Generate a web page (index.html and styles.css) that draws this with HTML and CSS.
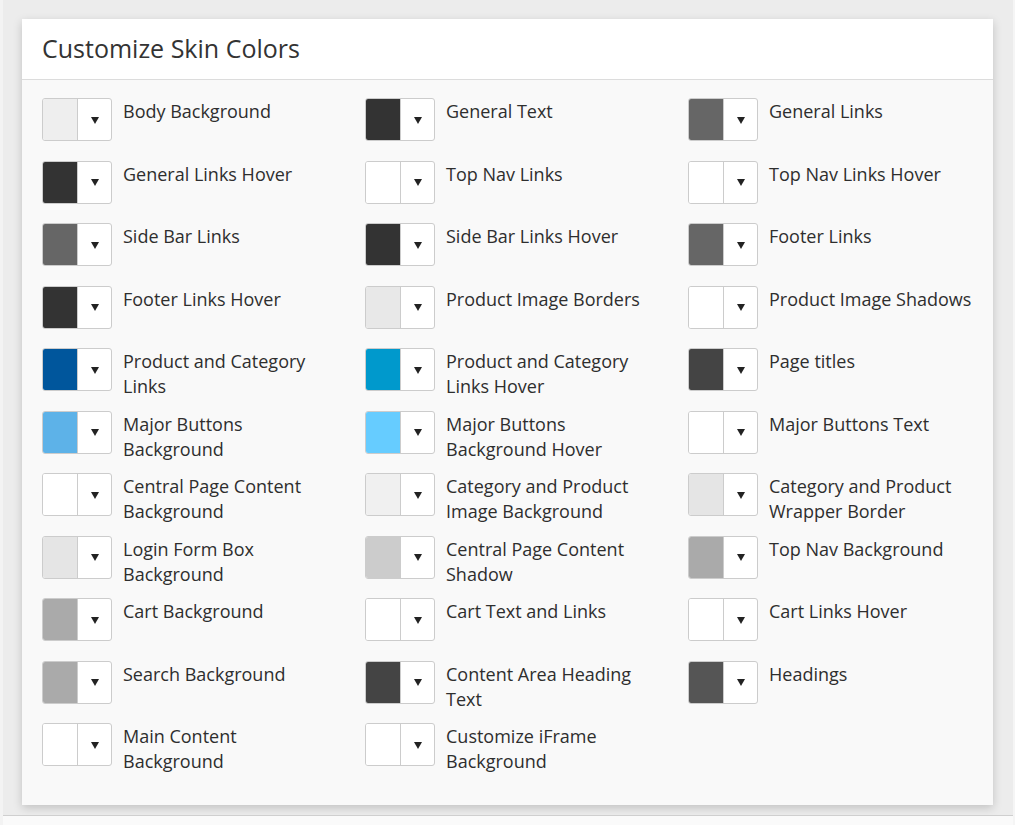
FILE: index.html
```html
<!DOCTYPE html>
<html lang="en">
<head>
  <meta charset="UTF-8">
  <meta name="viewport" content="width=device-width, initial-scale=1.0">
  <title>Customize Skin Colors</title>
  <link rel="stylesheet" href="styles.css">
</head>
<body>
  <div class="page">
    <div class="page-main">
      <div class="skin-panel">
        <div class="skin-panel-header">Customize Skin Colors</div>
        <div class="skin-panel-body">
          <div class="color-field">
            <div class="color-picker"><span class="color-swatch" style="background:#eeeeee"></span><span class="color-arrow"></span></div>
            <div class="color-label">Body Background</div>
          </div>
          <div class="color-field">
            <div class="color-picker"><span class="color-swatch" style="background:#333333"></span><span class="color-arrow"></span></div>
            <div class="color-label">General Text</div>
          </div>
          <div class="color-field">
            <div class="color-picker"><span class="color-swatch" style="background:#666666"></span><span class="color-arrow"></span></div>
            <div class="color-label">General Links</div>
          </div>

          <div class="color-field">
            <div class="color-picker"><span class="color-swatch" style="background:#333333"></span><span class="color-arrow"></span></div>
            <div class="color-label">General Links Hover</div>
          </div>
          <div class="color-field">
            <div class="color-picker"><span class="color-swatch" style="background:#ffffff"></span><span class="color-arrow"></span></div>
            <div class="color-label">Top Nav Links</div>
          </div>
          <div class="color-field">
            <div class="color-picker"><span class="color-swatch" style="background:#ffffff"></span><span class="color-arrow"></span></div>
            <div class="color-label">Top Nav Links Hover</div>
          </div>

          <div class="color-field">
            <div class="color-picker"><span class="color-swatch" style="background:#666666"></span><span class="color-arrow"></span></div>
            <div class="color-label">Side Bar Links</div>
          </div>
          <div class="color-field">
            <div class="color-picker"><span class="color-swatch" style="background:#333333"></span><span class="color-arrow"></span></div>
            <div class="color-label">Side Bar Links Hover</div>
          </div>
          <div class="color-field">
            <div class="color-picker"><span class="color-swatch" style="background:#666666"></span><span class="color-arrow"></span></div>
            <div class="color-label">Footer Links</div>
          </div>

          <div class="color-field">
            <div class="color-picker"><span class="color-swatch" style="background:#333333"></span><span class="color-arrow"></span></div>
            <div class="color-label">Footer Links Hover</div>
          </div>
          <div class="color-field">
            <div class="color-picker"><span class="color-swatch" style="background:#e8e8e8"></span><span class="color-arrow"></span></div>
            <div class="color-label">Product Image Borders</div>
          </div>
          <div class="color-field">
            <div class="color-picker"><span class="color-swatch" style="background:#ffffff"></span><span class="color-arrow"></span></div>
            <div class="color-label">Product Image Shadows</div>
          </div>

          <div class="color-field">
            <div class="color-picker"><span class="color-swatch" style="background:#00569c"></span><span class="color-arrow"></span></div>
            <div class="color-label">Product and Category Links</div>
          </div>
          <div class="color-field">
            <div class="color-picker"><span class="color-swatch" style="background:#0099cc"></span><span class="color-arrow"></span></div>
            <div class="color-label">Product and Category Links Hover</div>
          </div>
          <div class="color-field">
            <div class="color-picker"><span class="color-swatch" style="background:#444444"></span><span class="color-arrow"></span></div>
            <div class="color-label">Page titles</div>
          </div>

          <div class="color-field">
            <div class="color-picker"><span class="color-swatch" style="background:#5db2e8"></span><span class="color-arrow"></span></div>
            <div class="color-label">Major Buttons Background</div>
          </div>
          <div class="color-field">
            <div class="color-picker"><span class="color-swatch" style="background:#66ccff"></span><span class="color-arrow"></span></div>
            <div class="color-label">Major Buttons Background Hover</div>
          </div>
          <div class="color-field">
            <div class="color-picker"><span class="color-swatch" style="background:#ffffff"></span><span class="color-arrow"></span></div>
            <div class="color-label">Major Buttons Text</div>
          </div>

          <div class="color-field">
            <div class="color-picker"><span class="color-swatch" style="background:#ffffff"></span><span class="color-arrow"></span></div>
            <div class="color-label">Central Page Content Background</div>
          </div>
          <div class="color-field">
            <div class="color-picker"><span class="color-swatch" style="background:#f0f0f0"></span><span class="color-arrow"></span></div>
            <div class="color-label">Category and Product Image Background</div>
          </div>
          <div class="color-field">
            <div class="color-picker"><span class="color-swatch" style="background:#e5e5e5"></span><span class="color-arrow"></span></div>
            <div class="color-label">Category and Product Wrapper Border</div>
          </div>

          <div class="color-field">
            <div class="color-picker"><span class="color-swatch" style="background:#e5e5e5"></span><span class="color-arrow"></span></div>
            <div class="color-label">Login Form Box Background</div>
          </div>
          <div class="color-field">
            <div class="color-picker"><span class="color-swatch" style="background:#cccccc"></span><span class="color-arrow"></span></div>
            <div class="color-label">Central Page Content Shadow</div>
          </div>
          <div class="color-field">
            <div class="color-picker"><span class="color-swatch" style="background:#aaaaaa"></span><span class="color-arrow"></span></div>
            <div class="color-label">Top Nav Background</div>
          </div>

          <div class="color-field">
            <div class="color-picker"><span class="color-swatch" style="background:#aaaaaa"></span><span class="color-arrow"></span></div>
            <div class="color-label">Cart Background</div>
          </div>
          <div class="color-field">
            <div class="color-picker"><span class="color-swatch" style="background:#ffffff"></span><span class="color-arrow"></span></div>
            <div class="color-label">Cart Text and Links</div>
          </div>
          <div class="color-field">
            <div class="color-picker"><span class="color-swatch" style="background:#ffffff"></span><span class="color-arrow"></span></div>
            <div class="color-label">Cart Links Hover</div>
          </div>

          <div class="color-field">
            <div class="color-picker"><span class="color-swatch" style="background:#aaaaaa"></span><span class="color-arrow"></span></div>
            <div class="color-label">Search Background</div>
          </div>
          <div class="color-field">
            <div class="color-picker"><span class="color-swatch" style="background:#444444"></span><span class="color-arrow"></span></div>
            <div class="color-label">Content Area Heading Text</div>
          </div>
          <div class="color-field">
            <div class="color-picker"><span class="color-swatch" style="background:#555555"></span><span class="color-arrow"></span></div>
            <div class="color-label">Headings</div>
          </div>

          <div class="color-field">
            <div class="color-picker"><span class="color-swatch" style="background:#ffffff"></span><span class="color-arrow"></span></div>
            <div class="color-label">Main Content Background</div>
          </div>
          <div class="color-field">
            <div class="color-picker"><span class="color-swatch" style="background:#ffffff"></span><span class="color-arrow"></span></div>
            <div class="color-label">Customize iFrame Background</div>
          </div>
        </div>
      </div>
    </div>
    <div class="page-footer"></div>
  </div>
</body>
</html>
```

FILE: styles.css
```css
* {
  margin: 0;
  padding: 0;
  box-sizing: border-box;
}

body {
  background-color: #ececec;
  font-family: "Open Sans", "Liberation Sans", sans-serif;
  color: #333;
  height: 825px;
  overflow: hidden;
}

.page {
  display: flex;
  flex-direction: column;
  height: 100%;
  border-left: 3px solid #f3f3f3;
  border-right: 2px solid #f5f5f5;
}

.page-main {
  padding: 19px 20px 0 19px;
  height: 815px;
}

.skin-panel {
  width: 971px;
  background-color: #f9f9f9;
  box-shadow: 0 3px 9px rgba(0, 0, 0, 0.18);
}

.skin-panel-header {
  background-color: #fff;
  height: 61px;
  line-height: 58px;
  padding-left: 20px;
  font-size: 25px;
  color: #333;
  border-bottom: 1px solid #dcdcdc;
}

.skin-panel-body {
  display: grid;
  grid-template-columns: 323px 323px 1fr;
  grid-auto-rows: 62.5px;
  padding: 18px 0 19px 20px;
}

.color-field {
  display: flex;
  align-items: flex-start;
}

.color-picker {
  display: flex;
  flex-shrink: 0;
  width: 70px;
  height: 43px;
  border: 1px solid #ccc;
  border-radius: 3px;
  background-color: #fff;
  overflow: hidden;
}

.color-swatch {
  width: 35px;
  border-right: 1px solid #ccc;
}

.color-arrow {
  flex: 1;
  display: flex;
  align-items: center;
  justify-content: center;
  padding-top: 1px;
}

.color-arrow::before {
  content: "";
  border-left: 4.5px solid transparent;
  border-right: 4.5px solid transparent;
  border-top: 7px solid #222;
}

.color-label {
  margin-left: 11px;
  margin-top: 1px;
  font-size: 18px;
  line-height: 25px;
  color: #2e2e2e;
  max-width: 205px;
}

.page-footer {
  flex: 1;
  border-top: 1px solid #cfcfcf;
  background-color: #fafafa;
}
```
